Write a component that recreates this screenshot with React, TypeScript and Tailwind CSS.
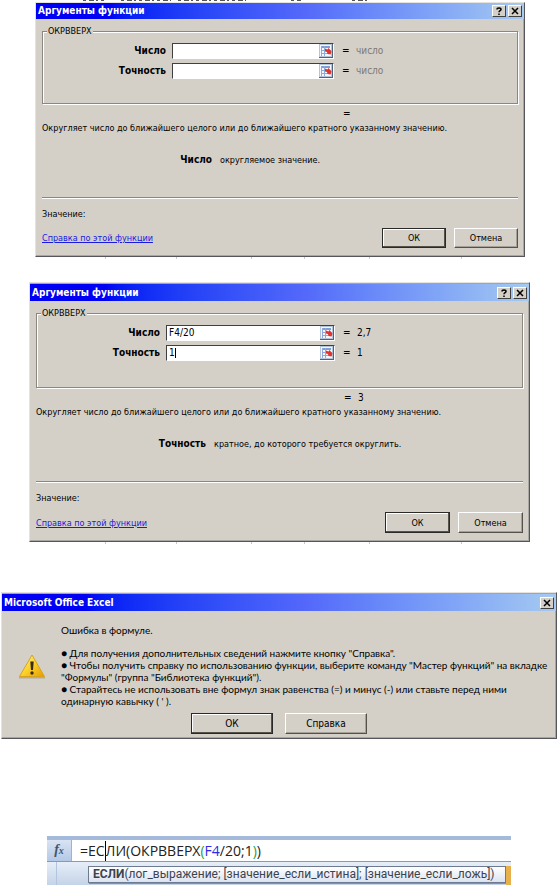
import { ReactNode } from "react";

type Argument = { id: string; label: string; value: string; result: string; caret?: boolean };

function PickerIcon() {
  return (
    <svg viewBox="0 0 14 14" className="h-3.5 w-3.5">
      <rect width="14" height="14" fill="#b4c4da" />
      <rect x="1" y="1" width="11" height="11" fill="#f4f7fd" />
      <rect x="2" y="2" width="9" height="2" fill="#7e9fd6" />
      <path d="M2 6.500h10M2 9.500h10M5.500 2v10M2.500 2v10" stroke="#8fa9d8" fill="none" />
      <path d="M6 4.500l2.500 1 1-1.500 3 3.500-1 3-3-.5-.5-2-2-.5z" fill="#e0352f" />
      <path d="M0 13.500h14M13.500 0v14" stroke="#4d6380" />
    </svg>
  );
}

function WarningIcon() {
  return (
    <svg viewBox="0 0 28 26" className="h-[26px] w-7">
      <defs>
        <linearGradient id="warn" x1="0" y1="0" x2="1" y2="1">
          <stop offset="0" stopColor="#fff3a0" />
          <stop offset="0.5" stopColor="#fbd22c" />
          <stop offset="1" stopColor="#e59a00" />
        </linearGradient>
      </defs>
      <path d="M1 24.500h26" stroke="#9a958a" strokeWidth="2" opacity="0.6" />
      <path d="M14 2L26.500 23.500H1.500z" fill="url(#warn)" stroke="#d8a41c" strokeLinejoin="round" />
      <path d="M12.300 8.500h3.400l-.7 8.500h-2z" fill="#3a2c10" />
      <circle cx="14" cy="20" r="1.700" fill="#3a2c10" />
    </svg>
  );
}

function CaptionButton({ label, children }: { label: string; children: ReactNode }) {
  return (
    <button
      type="button"
      aria-label={label}
      className="flex h-3 w-3.5 items-center justify-center border border-t-white border-r-[#404040] border-b-[#404040] border-l-white bg-[#d4d0c8]"
    >
      {children}
    </button>
  );
}

function HelpGlyph() {
  return (
    <svg viewBox="0 0 8 8" className="h-2 w-2">
      <path d="M2 2.500C2 .5 6 .5 6 2.500 6 3.700 4 3.700 4 5.300M4 6.500V8" stroke="#000" strokeWidth="1.500" fill="none" />
    </svg>
  );
}

function CloseGlyph() {
  return (
    <svg viewBox="0 0 8 8" className="h-2 w-2">
      <path d="M1 1l6 6M7 1L1 7" stroke="#000" strokeWidth="1.500" />
    </svg>
  );
}

function TitleBar({ title, help, tall }: { title: string; help?: boolean; tall?: boolean }) {
  return (
    <div
      className={`${tall ? "h-[18px] border-t" : "h-4"} flex items-center justify-between border-[#8fa0f0] bg-linear-to-r from-[#0000f4] from-15% via-[#5468fa] via-55% to-[#a6caf0] px-0.5`}
    >
      <h2 className="text-[10px] leading-4 font-bold text-white">{title}</h2>
      <div className="flex gap-0.5">
        {help && (
          <CaptionButton label="Справка">
            <HelpGlyph />
          </CaptionButton>
        )}
        <CaptionButton label="Закрыть">
          <CloseGlyph />
        </CaptionButton>
      </div>
    </div>
  );
}

function DialogButton({ children, primary, className }: { children: ReactNode; primary?: boolean; className: string }) {
  return (
    <button
      type="button"
      className={`${className} ${
        primary
          ? "border-[#2a2a28] shadow-[inset_-1px_-1px_0_#55524c,inset_1px_1px_0_#fff]"
          : "border-t-white border-r-[#55524c] border-b-[#55524c] border-l-white shadow-[inset_-1px_-1px_0_#a5a199]"
      } border bg-[#d4d0c8] leading-3`}
    >
      {children}
    </button>
  );
}

const frame =
  "border border-t-[#e6e3dc] border-r-[#55565c] border-b-[#55565c] border-l-[#e6e3dc] bg-[#d4d0c8] shadow-[inset_-1px_-1px_0_#a9a7a3]";

function ArgumentsDialog({
  args,
  total,
  hint,
  roomy,
}: {
  args: Argument[];
  total: string;
  hint: { name: string; text: string };
  roomy?: boolean;
}) {
  const resultWidth = roomy ? "w-[179px]" : "w-[175px]";
  const buttonSize = roomy ? "h-[21px] w-[65px]" : "h-5 w-16";
  return (
    <section className={frame}>
      <TitleBar title="Аргументы функции" help tall={roomy} />
      <div className="px-1.5 pt-1.5 pb-2">
        <fieldset
          className={`${roomy ? "pb-[26px]" : "pb-6"} border border-[#8a8782] pt-1.5 shadow-[1px_1px_0_#fff,inset_1px_1px_0_#fff]`}
        >
          <legend className="ml-1 bg-[#d4d0c8] px-px leading-3">ОКРВВЕРХ</legend>
          <div className="flex flex-col gap-1">
            {args.map((arg) => (
              <div key={arg.id} className="flex h-4 items-center text-[10px]">
                <label htmlFor={arg.id} className="mr-1.5 w-[123px] text-right font-bold">
                  {arg.label}
                </label>
                <div className="relative mr-2 flex h-4 min-w-0 flex-1 border border-t-[#404040] border-r-white border-b-white border-l-[#404040] bg-white">
                  <input id={arg.id} type="text" defaultValue={arg.value} className="min-w-0 flex-1 px-0.5 leading-3 outline-none" />
                  {arg.caret && <span className="absolute top-0.5 left-2 h-2.5 w-px bg-black" />}
                  <button type="button" aria-label="Свернуть">
                    <PickerIcon />
                  </button>
                </div>
                <div className={`${resultWidth} flex`}>
                  <span className="w-3.5">=</span>
                  <span className={arg.value ? "" : "text-[#7d7a75]"}>{arg.result}</span>
                </div>
              </div>
            ))}
          </div>
        </fieldset>
        <div className="mt-1 flex h-3 justify-end text-[10px]">
          <div className={`${resultWidth} flex`}>
            <span className="w-3.5">=</span>
            <span>{total}</span>
          </div>
        </div>
        <p className="mt-0.5 whitespace-nowrap">Округляет число до ближайшего целого или до ближайшего кратного указанному значению.</p>
        <p className="mt-5 flex gap-2 whitespace-nowrap">
          <b className="w-[170px] text-right text-[10px]">{hint.name}</b>
          <span>{hint.text}</span>
        </p>
        <hr className="mt-[31px] border-t border-[#8a8782] shadow-[0_1px_0_#fff]" />
        <p className="mt-2.5">Значение:</p>
        <div className="mt-2 flex items-center justify-between">
          <a href="#help" className="text-[#1a1ae0] underline">
            Справка по этой функции
          </a>
          <div className="flex gap-2">
            <DialogButton primary className={buttonSize}>
              ОК
            </DialogButton>
            <DialogButton className={buttonSize}>Отмена</DialogButton>
          </div>
        </div>
      </div>
    </section>
  );
}

function ErrorDialog() {
  return (
    <section className={frame}>
      <TitleBar title="Microsoft Office Excel" tall />
      <div className="flex pt-[13px] font-['Lato','DejaVu_Sans',sans-serif] text-[10px]">
        <div className="mr-[15px] ml-4 flex items-center">
          <WarningIcon />
        </div>
        <div>
          <p>Ошибка в формуле.</p>
          <p className="mt-[11px]">● Для получения дополнительных сведений нажмите кнопку "Справка".</p>
          <p>
            ● Чтобы получить справку по использованию функции, выберите команду "Мастер функций" на вкладке
            <br />
            "Формулы" (группа "Библиотека функций").
          </p>
          <p>
            ● Старайтесь не использовать вне формул знак равенства (=) и минус (-) или ставьте перед ними
            <br />
            одинарную кавычку ( ' ).
          </p>
        </div>
      </div>
      <div className="flex justify-center gap-3 pt-1.5 pb-1 text-[10px]">
        <DialogButton primary className="h-[21px] w-[82px]">
          ОК
        </DialogButton>
        <DialogButton className="h-[21px] w-[82px]">Справка</DialogButton>
      </div>
    </section>
  );
}

function FormulaBar() {
  return (
    <section className="bg-[#dfe8f5] font-['Open_Sans',sans-serif]">
      <div className="flex h-[26px] border-t-4 border-b border-t-[#a5b9db] border-b-[#7f9bc4] bg-white">
        <button
          type="button"
          aria-label="Вставить функцию"
          className="w-[25px] border-r border-[#9db3d6] bg-linear-to-b from-[#d9e4f3] to-[#b4c8e6] font-['Liberation_Serif',serif] text-sm leading-5 font-bold text-[#44546a] italic"
        >
          f<span className="text-[10px]">x</span>
        </button>
        <div role="textbox" aria-label="Строка формул" className="flex items-center pl-2 text-sm leading-5 whitespace-nowrap text-[#222]">
          =ЕС<span className="h-5 w-px bg-black" />ЛИ(ОКРВВЕРХ<span className="text-[#2f9a3a]">(</span>
          <span className="text-[#2a2ae8]">F4</span>/20;1<span className="text-[#2f9a3a]">)</span>)
        </div>
      </div>
      <div className="flex h-[23px] bg-linear-to-b from-[#e6eef8] to-[#c5d3e8]">
        <div className="w-2.5 border-r border-[#b3c4de]" />
        <div className="mt-1 ml-[31px] h-[17px] flex-1 border border-[#6d7a90] bg-linear-to-b from-white to-[#dbe3f2] pl-1 font-['Roboto',sans-serif] text-[12px] leading-[15px] whitespace-nowrap text-[#3d434d] shadow-[1px_1px_0_#8f8f8f]">
          <b>ЕСЛИ</b>(лог_выражение; [значение_если_истина]; [значение_если_ложь])
        </div>
        <div className="mt-1 w-[5px] bg-[#e8b04c]" />
      </div>
    </section>
  );
}

// Bits of the worksheet that show around the dialogs
function SheetTextEdge() {
  return (
    <svg viewBox="0 0 558 2" className="h-0.5 w-full" aria-hidden="true">
      <path d="M83 .5h21M121 .5h50M178 .5h68M291 .5h10M352 .5h16" stroke="#555" strokeDasharray="3 3 5 2 2 3" />
    </svg>
  );
}

function SheetTicks() {
  return (
    <svg viewBox="0 0 558 2" className="h-0.5 w-full" aria-hidden="true">
      <path d="M105.500 0v2M176.500 0v2M251.500 0v2M304.500 0v2M369.500 0v2M461.500 0v2" stroke="#c8c8c8" />
    </svg>
  );
}

export default function App() {
  return (
    <main className="bg-white font-['DejaVu_Sans_Condensed','DejaVu_Sans',sans-serif] text-[9px] leading-3 text-black">
      <SheetTextEdge />
      <div className="pr-[33px] pl-[35px]">
        <ArgumentsDialog
          args={[
            { id: "number-a", label: "Число", value: "", result: "число" },
            { id: "precision-a", label: "Точность", value: "", result: "число" },
          ]}
          total=""
          hint={{ name: "Число", text: "округляемое значение." }}
        />
      </div>
      <SheetTicks />
      <div className="mt-[23px] pr-7 pl-[29px]">
        <ArgumentsDialog
          roomy
          args={[
            { id: "number-b", label: "Число", value: "F4/20", result: "2,7" },
            { id: "precision-b", label: "Точность", value: "1", result: "1", caret: true },
          ]}
          total="3"
          hint={{ name: "Точность", text: "кратное, до которого требуется округлить." }}
        />
      </div>
      <SheetTicks />
      <div className="mt-12 px-px">
        <ErrorDialog />
      </div>
      <div className="mt-[97px] px-[47px]">
        <FormulaBar />
      </div>
    </main>
  );
}
